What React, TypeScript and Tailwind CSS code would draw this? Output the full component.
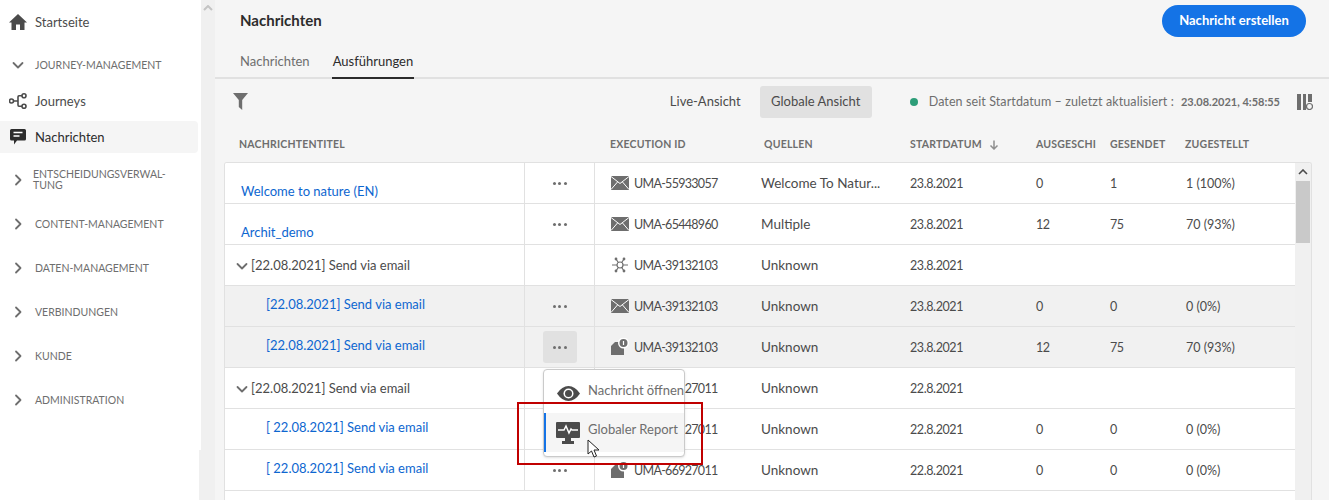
import type { ReactNode } from "react";

type Row = {
  title: string;
  kind: "link" | "group" | "child";
  titleClass: string;
  dots: boolean;
  icon: "mail" | "hub" | "doc";
  id: string;
  source: string;
  date: string;
  a?: string;
  b?: string;
  c?: string;
  hover?: boolean;
};

const rows: Row[] = [
  { title: "Welcome to nature (EN)", kind: "link", titleClass: "pt-[18px]", dots: true, icon: "mail", id: "UMA-55933057", source: "Welcome To Natur...", date: "23.8.2021", a: "0", b: "1", c: "1 (100%)" },
  { title: "Archit_demo", kind: "link", titleClass: "pt-[18px]", dots: true, icon: "mail", id: "UMA-65448960", source: "Multiple", date: "23.8.2021", a: "12", b: "75", c: "70 (93%)" },
  { title: "[22.08.2021] Send via email", kind: "group", titleClass: "pt-[2px]", dots: false, icon: "hub", id: "UMA-39132103", source: "Unknown", date: "23.8.2021" },
  { title: "[22.08.2021] Send via email", kind: "child", titleClass: "pb-[2px]", dots: true, icon: "mail", id: "UMA-39132103", source: "Unknown", date: "23.8.2021", a: "0", b: "0", c: "0 (0%)", hover: true },
  { title: "[22.08.2021] Send via email", kind: "child", titleClass: "pb-[2px]", dots: true, icon: "doc", id: "UMA-39132103", source: "Unknown", date: "23.8.2021", a: "12", b: "75", c: "70 (93%)", hover: true },
  { title: "[22.08.2021] Send via email", kind: "group", titleClass: "pt-[2px]", dots: false, icon: "hub", id: "UMA-66927011", source: "Unknown", date: "22.8.2021" },
  { title: "[ 22.08.2021] Send via email", kind: "child", titleClass: "pb-[2px]", dots: false, icon: "mail", id: "UMA-66927011", source: "Unknown", date: "22.8.2021", a: "0", b: "0", c: "0 (0%)" },
  { title: "[ 22.08.2021] Send via email", kind: "child", titleClass: "pb-[2px]", dots: true, icon: "doc", id: "UMA-66927011", source: "Unknown", date: "22.8.2021", a: "0", b: "0", c: "0 (0%)" },
];

function Chevron({ down }: { down?: boolean }) {
  return (
    <svg width="12" height="12" viewBox="0 0 12 12" className="text-[#6e6e6e]">
      <path d={down ? "M1.5 4 L6 8.5 L10.5 4" : "M4 1.5 L8.5 6 L4 10.5"} fill="none" stroke="currentColor" strokeWidth="1.8" strokeLinecap="round" strokeLinejoin="round" />
    </svg>
  );
}

function MailIcon() {
  return (
    <svg width="18" height="14" viewBox="0 0 18 14" className="shrink-0">
      <rect width="18" height="14" fill="#6e6e6e" />
      <path d="M0 0.5 L9 7.5 L18 0.5 M0 13.5 L6.5 6 M18 13.5 L11.5 6" fill="none" stroke="#fff" strokeWidth="1" />
    </svg>
  );
}

function HubIcon() {
  return (
    <svg width="18" height="18" viewBox="0 0 18 18" className="shrink-0" fill="none" stroke="#6e6e6e" strokeWidth="1.2">
      <circle cx="9" cy="9" r="3" />
      <path d="M1 9 H6 M12 9 H17 M5 3 L7.3 6.5 M13 3 L10.7 6.5 M5 15 L7.3 11.5 M13 15 L10.7 11.5" />
      <circle cx="5" cy="3" r="0.8" fill="#6e6e6e" />
      <circle cx="13" cy="3" r="0.8" fill="#6e6e6e" />
      <circle cx="5" cy="15" r="0.8" fill="#6e6e6e" />
      <circle cx="13" cy="15" r="0.8" fill="#6e6e6e" />
    </svg>
  );
}

function DocIcon() {
  return (
    <svg width="18" height="18" viewBox="0 0 18 18" className="shrink-0">
      <path d="M4 4 H13 V17 H0 V8 Z" fill="#6e6e6e" />
      <circle cx="12.5" cy="5" r="5.5" fill="#fff" />
      <circle cx="12.5" cy="5" r="4" fill="#6e6e6e" />
      <path d="M12.5 3 V7" stroke="#fff" strokeWidth="1.2" />
    </svg>
  );
}

function Dots() {
  return (
    <span className="flex gap-[2.5px]">
      <span className="h-[3px] w-[3px] rounded-full bg-[#6e6e6e]" />
      <span className="h-[3px] w-[3px] rounded-full bg-[#6e6e6e]" />
      <span className="h-[3px] w-[3px] rounded-full bg-[#6e6e6e]" />
    </span>
  );
}

function Section({ label, tight }: { label: ReactNode; tight?: boolean }) {
  return (
    <div className="flex h-[44px] items-center pl-[12px]">
      <Chevron />
      <span className={`${tight ? "ml-[9px] leading-[11px]" : "ml-[11px] pt-[2px]"} text-[10.5px] text-[#6e6e6e]`}>{label}</span>
    </div>
  );
}

function Sidebar() {
  return (
    <aside className="flex h-full w-[201px] shrink-0 flex-col bg-white text-[13px] text-[#4b4b4b]">
      <div className="mt-[6px] flex h-[32px] items-center pl-[9px]">
        <svg width="18" height="16" viewBox="0 0 18 16">
          <path d="M9 0 L18 8.5 H15.5 V16 H11 V10.5 H7 V16 H2.5 V8.5 H0 Z" fill="#4b4b4b" />
        </svg>
        <span className="ml-[8px] pt-[2px]">Startseite</span>
      </div>
      <div className="mt-[17px] flex h-[20px] items-center pl-[12px]">
        <Chevron down />
        <span className="ml-[11px] pt-[2px] text-[10.5px] text-[#6e6e6e]">JOURNEY-MANAGEMENT</span>
      </div>
      <div className="mt-[10px] flex h-[32px] items-center pl-[9px]">
        <svg width="18" height="16" viewBox="0 0 18 16" fill="none" stroke="#4b4b4b" strokeWidth="1.6">
          <circle cx="2.5" cy="8" r="2" />
          <circle cx="15" cy="2.8" r="2" />
          <circle cx="15" cy="13.2" r="2" />
          <path d="M4.5 8 H9 M13 2.8 H10 Q9 2.8 9 4 V12 Q9 13.2 10 13.2 H13" />
        </svg>
        <span className="ml-[8px] pt-[2px]">Journeys</span>
      </div>
      <div className="mt-[4px] flex h-[32px] w-[198px] items-center rounded-r-[4px] bg-[#f5f5f5] pl-[10px] text-[#2c2c2c]">
        <svg width="16" height="16" viewBox="0 0 16 16">
          <path d="M1.5 0 H14.5 Q16 0 16 1.5 V10 Q16 11.5 14.5 11.5 H7 L4 15.5 V11.5 H1.5 Q0 11.5 0 10 V1.5 Q0 0 1.5 0 Z" fill="#2c2c2c" />
          <path d="M3.5 3.5 H12.5 M3.5 7 H9.5" stroke="#fff" strokeWidth="1.4" />
        </svg>
        <span className="ml-[9px] pt-[2px]">Nachrichten</span>
      </div>
      <div className="mt-[5px]">
        <Section tight label={<>ENTSCHEIDUNGSVERWAL-<br />TUNG</>} />
        <Section label="CONTENT-MANAGEMENT" />
        <Section label="DATEN-MANAGEMENT" />
        <Section label="VERBINDUNGEN" />
        <Section label="KUNDE" />
        <Section label="ADMINISTRATION" />
      </div>
    </aside>
  );
}

function TableRow({ row }: { row: Row }) {
  const bg = row.hover ? "bg-[#f1f1f1]" : "bg-white";
  const num = "flex items-center pt-[2px] text-[12.5px] tracking-[-0.4px]";
  return (
    <div className={`grid h-[41px] grid-cols-[300px_70px_166px_149px_126px_74px_75px_1fr] items-stretch border-b border-[#e1e1e1] text-[13px] text-[#4b4b4b] ${bg}`}>
      <div className={`flex items-center border-r border-[#e1e1e1] ${row.titleClass}`}>
        {row.kind === "group" && (
          <span className="ml-[11px] mr-[3px] flex"><Chevron down /></span>
        )}
        {row.kind === "link" && <a className="ml-[16px] text-[#0d66d0]">{row.title}</a>}
        {row.kind === "child" && <a className="ml-[41px] text-[#0d66d0]">{row.title}</a>}
        {row.kind === "group" && <span>{row.title}</span>}
      </div>
      <div className="flex items-center justify-center border-r border-[#e1e1e1]">
        {row.dots && (
          <span className={row.id === "UMA-39132103" && row.icon === "doc" ? "flex h-[32px] w-[34px] items-center justify-center rounded-[3px] bg-[#e1e1e1]" : "flex"}>
            <Dots />
          </span>
        )}
      </div>
      <div className="flex items-center gap-[5px] pl-[16px]">
        {row.icon === "mail" && <MailIcon />}
        {row.icon === "hub" && <HubIcon />}
        {row.icon === "doc" && <DocIcon />}
        <span className="pt-[2px] text-[12.5px] tracking-[-0.7px]">{row.id}</span>
      </div>
      <div className="flex items-center text-[13.5px]">{row.source}</div>
      <div className={num}>{row.date}</div>
      <div className={num}>{row.a}</div>
      <div className={num}>{row.b}</div>
      <div className="flex items-center pl-[1px] pt-[2px] text-[12.5px]">{row.c}</div>
    </div>
  );
}

export default function App() {
  return (
    <div className="relative flex h-[500px] w-[1329px] overflow-hidden bg-[#f5f5f5] font-['Lato',sans-serif]">
      <Sidebar />
      {/* sidebar scroll track */}
      <div className="flex h-full w-[14px] shrink-0 justify-center bg-[#f0f0f0] pt-[3px]">
        <svg width="10" height="6" viewBox="0 0 10 6" className="mt-[2px]">
          <path d="M1 5 L5 1 L9 5" fill="none" stroke="#c4c4c4" strokeWidth="2" />
        </svg>
      </div>
      <main className="flex h-full min-w-0 flex-1 flex-col">
        <div className="h-[79px] shrink-0 border-b-2 border-[#e1e1e1]">
          <div className="flex h-[50px] items-start justify-between pl-[25px] pr-[23px]">
            <h1 className="mt-[9px] text-[15px] font-bold text-[#2c2c2c]">Nachrichten</h1>
            <button className="mt-[5px] h-[32px] w-[144px] rounded-full bg-[#1473e6] text-[13px] font-bold text-white">Nachricht erstellen</button>
          </div>
          <div className="flex h-[27px] items-stretch gap-[22px] pl-[25px] text-[13px]">
            <span className="flex items-start pt-[2px] text-[#6e6e6e]">Nachrichten</span>
            <span className="-mb-[2px] flex items-start border-b-2 border-[#2c2c2c] px-[1px] pt-[2px] text-[#2c2c2c]">Ausführungen</span>
          </div>
        </div>

        <div className="flex h-[46px] shrink-0 items-center pl-[18px] pr-[16px]">
          <svg width="15" height="17" viewBox="0 0 15 17" className="-mt-[2px]">
            <path d="M0 0 H15 L9.2 7 V17 L5.8 14 V7 Z" fill="#6e6e6e" />
          </svg>
          <span className="ml-auto flex items-center text-[13px] text-[#4b4b4b]">Live-Ansicht</span>
          <span className="ml-[19px] flex h-[32px] w-[112px] items-center justify-center rounded-[3px] bg-[#e1e1e1] text-[13px] text-[#4b4b4b]">Globale Ansicht</span>
          <span className="ml-[38px] h-[8px] w-[8px] rounded-full bg-[#2d9d78]" />
          <span className="ml-[11px] text-[12.5px] tracking-[0.1px] text-[#6e6e6e]">Daten seit Startdatum – zuletzt aktualisiert :</span>
          <span className="ml-[7px] text-[11px] font-bold text-[#6e6e6e]">23.08.2021, 4:58:55</span>
          <svg width="16" height="16" viewBox="0 0 16 16" className="ml-[17px]">
            <path d="M0 0 H4 V16 H0 Z M6 0 H9 V16 H6 Z M11 0 H15 V8 H11 Z" fill="#6e6e6e" />
            <circle cx="12.5" cy="12.5" r="3" fill="#f5f5f5" stroke="#6e6e6e" strokeWidth="1.2" />
          </svg>
        </div>

        <div className="ml-[9px] mr-[17px] grid h-[37px] shrink-0 grid-cols-[301px_70px_166px_149px_126px_74px_75px_1fr] items-center pt-[3px] text-[10.5px] font-bold tracking-[0.2px] text-[#6e6e6e]">
          <span className="pl-[15px]">NACHRICHTENTITEL</span>
          <span />
          <span className="pl-[15px]">EXECUTION ID</span>
          <span className="pl-[3px]">QUELLEN</span>
          <span className="flex items-center">
            STARTDATUM
            <svg width="10" height="10" viewBox="0 0 10 10" className="ml-[7px]">
              <path d="M5 0.5 V9 M1.5 5.5 L5 9 L8.5 5.5" fill="none" stroke="#8e8e8e" strokeWidth="1.5" />
            </svg>
          </span>
          <span>AUSGESCHI</span>
          <span>GESENDET</span>
          <span>ZUGESTELLT</span>
        </div>

        <div className="ml-[9px] mr-[17px] flex min-h-0 flex-1 overflow-hidden rounded-t-[3px] border-x border-t border-[#e1e1e1] bg-white">
          <div className="min-w-0 flex-1">
            {rows.map((row, i) => (
              <TableRow key={i} row={row} />
            ))}
          </div>
          <div className="flex w-[16px] shrink-0 flex-col items-center bg-[#f0f0f0] px-[1px]">
            <svg width="10" height="6" viewBox="0 0 10 6" className="my-[6px]">
              <path d="M1 5 L5 1 L9 5" fill="none" stroke="#4b4b4b" strokeWidth="1.6" />
            </svg>
            <div className="h-[62px] w-full bg-[#c9c9c9]" />
          </div>
        </div>
      </main>

      {/* scroll track overlap at the bottom of the sidebar */}
      <div className="absolute left-[199px] top-[450px] h-[50px] w-[2px] bg-[#f0f0f0]" />

      {/* action menu */}
      <div className="absolute left-[543px] top-[369px] w-[142px] rounded-[4px] border border-[#cacaca] bg-white pb-[4px] text-[13px] text-[#6e6e6e] shadow-sm">
        <div className="flex h-[43px] items-center pl-[13px]">
          <svg width="23" height="15" viewBox="0 0 23 15" className="mt-[4px] shrink-0">
            <path d="M0 7.5 Q5 0 11.5 0 T23 7.5 Q18 15 11.5 15 T0 7.5 Z" fill="#4b4b4b" />
            <circle cx="11.5" cy="7.5" r="5" fill="#fff" />
            <circle cx="11.5" cy="7.5" r="3.5" fill="#4b4b4b" />
          </svg>
          <span className="ml-[8px] -mt-[2px] whitespace-nowrap">Nachricht öffnen</span>
        </div>
        <div className="flex h-[39px] items-center border-l-2 border-[#1473e6] bg-[#f5f5f5] pl-[10px]">
          <svg width="24" height="22" viewBox="0 0 24 22" className="shrink-0">
            <path d="M1 0 H23 Q24 0 24 1 V15 Q24 16 23 16 H1 Q0 16 0 15 V1 Q0 0 1 0 Z" fill="#4b4b4b" />
            <path d="M9 16 H15 V19 H18 V22 H6 V19 H9 Z" fill="#4b4b4b" />
            <path d="M2 8 H8 L10 4 L13 11 L15 7 L16 8 H22" fill="none" stroke="#fff" strokeWidth="1.5" />
          </svg>
          <span className="ml-[8px] -mt-[6px] whitespace-nowrap">Globaler Report</span>
        </div>
      </div>

      {/* red annotation */}
      <div className="absolute left-[517px] top-[402px] h-[63px] w-[186px] border-2 border-[#c00000]" />

      {/* mouse pointer */}
      <svg width="14" height="19" viewBox="0 0 14 19" className="absolute left-[587px] top-[439px]">
        <path d="M1 1 V15 L4.5 12 L7 18 L9.5 17 L7 11 H12 Z" fill="#fff" stroke="#222" strokeWidth="1" />
      </svg>
    </div>
  );
}
